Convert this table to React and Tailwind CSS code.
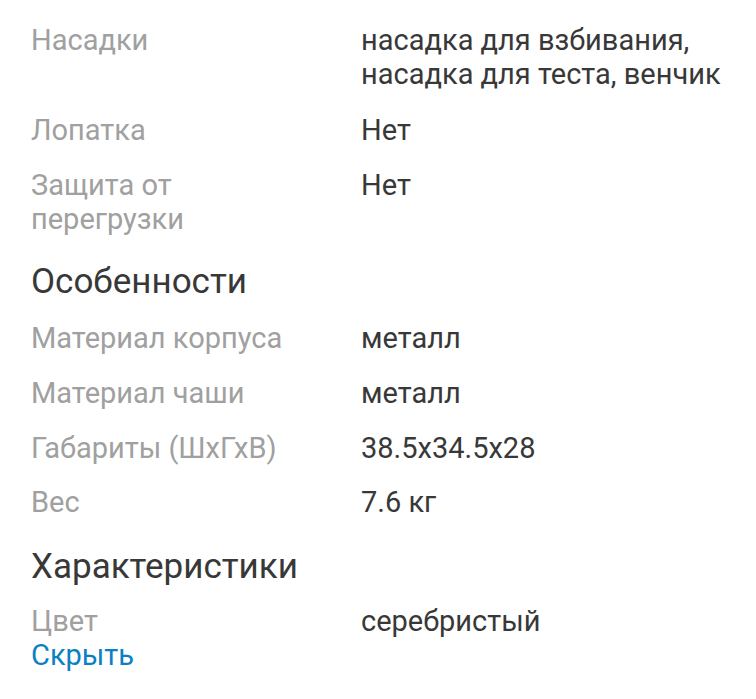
export default function App() {
  const Row = ({ label, value, className = "" }) => (
    <div className={"flex " + className}>
      <div className="w-[330px] shrink-0 text-[#a0a0a0] pr-4">{label}</div>
      <div className="flex-1 text-[#383838]">{value}</div>
    </div>
  );
  return (
    <div
      className="w-[756px] h-[699px] bg-white overflow-hidden pl-[31px] pt-[23px] text-[29px] leading-[34px]"
      style={{ fontFamily: "Roboto, 'Noto Sans', sans-serif" }}
    >
      <Row label="Насадки" value={<>насадка для взбивания,<br />насадка для теста, венчик</>} />
      <Row label="Лопатка" value="Нет" className="mt-[22px]" />
      <Row label={<>Защита от<br />перегрузки</>} value="Нет" className="mt-[21px]" />
      <div className="mt-[26px] h-[40px] leading-[40px] text-[35px] text-[#383838]">Особенности</div>
      <Row label="Материал корпуса" value="металл" className="mt-[19px]" />
      <Row label="Материал чаши" value="металл" className="mt-[21px]" />
      <Row label="Габариты (ШхГхВ)" value="38.5x34.5x28" className="mt-[21px]" />
      <Row label="Вес" value="7.6 кг" className="mt-[20px]" />
      <div className="mt-[28px] h-[40px] leading-[40px] text-[35px] text-[#383838]">Характеристики</div>
      <Row label="Цвет" value="серебристый" className="mt-[17px]" />
      <div className="text-[#0b80c3] leading-[35px]">Скрыть</div>
    </div>
  );
}
